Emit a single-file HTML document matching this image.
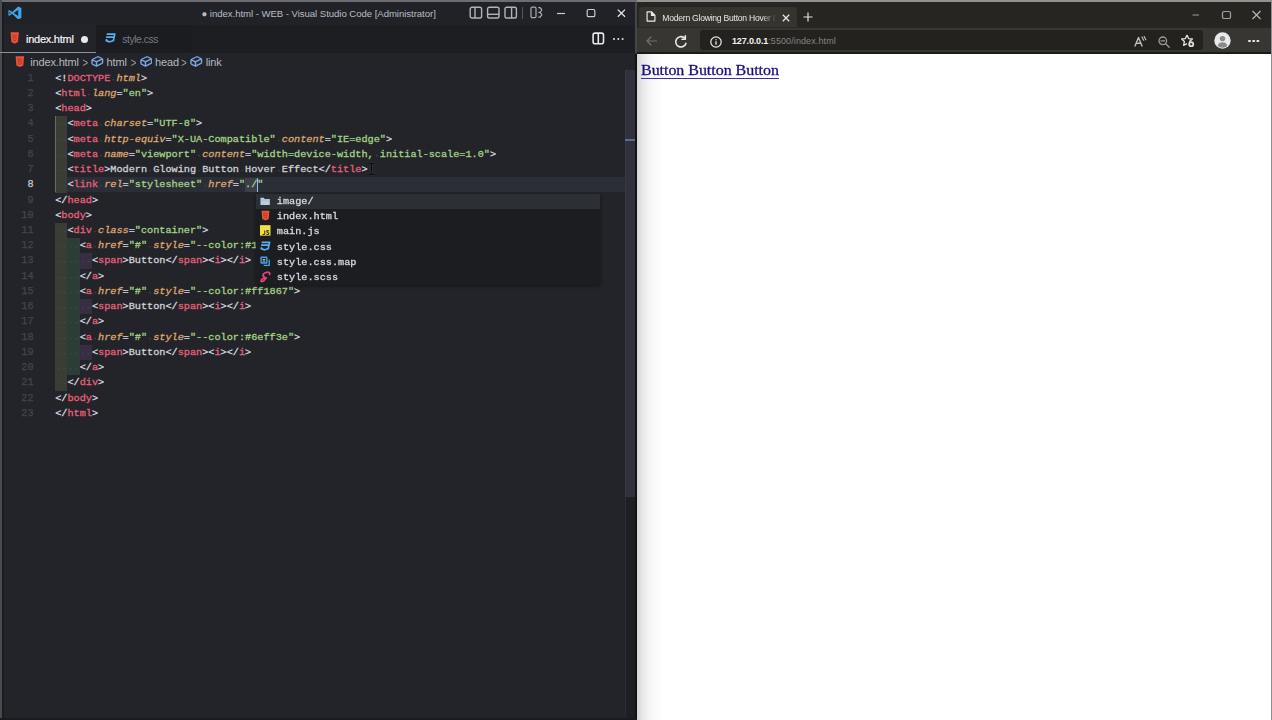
<!DOCTYPE html>
<html lang="en">
<head>
<meta charset="UTF-8">
<title>Modern Glowing Button Hover Effect</title>
<style>
*{box-sizing:border-box;margin:0;padding:0}
html,body{width:1272px;height:720px;overflow:hidden;background:#232429}
body{position:relative;font-family:"Liberation Sans",sans-serif}
.abs{position:absolute}
/* ---------- VS Code ---------- */
#vsc{position:absolute;left:0;top:0;width:637px;height:720px;background:#232429;overflow:hidden}
#vsc .topedge{position:absolute;left:0;top:0;width:637px;height:2px;background:#6c6c72}
#vsc .leftedge{position:absolute;left:0;top:0;width:2px;height:720px;background:#4a4b50}
#vsc .leftedge2{position:absolute;left:2px;top:2px;width:2px;height:718px;background:#1b1c20}
#vsc .rightedge{position:absolute;left:634.800px;top:2px;width:2.200px;height:718px;background:linear-gradient(180deg,#45464c 0,#45464c 51px,#131316 52px,#131316 100%)}
#vsc .tabline{position:absolute;left:0;top:51.500px;width:96px;height:1.400px;background:#8e9097}
#vsc .botedge{position:absolute;left:0;top:718px;width:637px;height:2px;background:#1a1b1f}
#title{position:absolute;left:2px;top:2px;width:635px;height:23px;background:#212227}
#title .txt{position:absolute;left:199.500px;top:0;height:23px;line-height:23px;font-size:9.600px;color:#b9bcc4;white-space:nowrap;letter-spacing:-0.050px}
#tabs{position:absolute;left:2px;top:25px;width:635px;height:28px;background:#1d1e22}
#tab1{position:absolute;left:0;top:0;width:94px;height:28px;background:#232429}
#tab1 .name{position:absolute;left:24px;top:0.800px;line-height:27px;font-size:11px;color:#f2f3f5;letter-spacing:-0.250px;white-space:nowrap;-webkit-text-stroke:0.200px currentColor}
#tab1 .dot{position:absolute;left:78.5px;top:10.5px;width:7px;height:7px;border-radius:50%;background:#e8e9ec}
#tab2{position:absolute;left:94px;top:0;width:95px;height:28px;background:#1b1c20;border-right:1px solid #17181b}
#tab2 .name{position:absolute;left:26.300px;top:0.800px;line-height:27px;font-size:10.400px;color:#767a84;letter-spacing:-0.460px;white-space:nowrap}
#crumbs{position:absolute;left:2px;top:53px;width:624px;height:17px;background:#232429;font-size:11px;color:#b4b8c1;white-space:nowrap;letter-spacing:-0.15px}
#crumbs span{position:absolute;top:0.6px;line-height:17px}
#crumbs .sep{color:#9a9ea8;font-size:9.5px;letter-spacing:0;transform:scaleY(1.25)}
#editor{position:absolute;left:0;top:0;width:637px;height:720px;font-family:"Liberation Mono",monospace;font-size:10.21px}
.ln{-webkit-text-stroke:0.250px currentColor;position:absolute;left:0;width:33.600px;text-align:right;height:15.23px;line-height:15.23px;color:#42444f;font-size:10.21px}
.ln.cur{color:#c5c8d0}
.cl{transform:translateY(0.500px) scaleY(0.920);transform-origin:0 55%;position:absolute;height:15.23px;line-height:15.23px;white-space:pre;color:#c6cad3;-webkit-text-stroke:0.300px currentColor}
.ind{position:absolute;width:12.25px;height:15.3px}
.i1{background:#3a3d33}
.i2{background:#2c3d36}
.i3{background:#382e42}
.p{color:#d9dce3}
.t{color:#e6607a}
.a{color:#dfa66e;font-style:italic}
.s{color:#a3d286}
.x{color:#ced1d9}
.w{position:relative}
.w:before{content:"\00b7";position:absolute;left:0;top:0;color:#474b56;-webkit-text-stroke:0;font-style:normal}
#curline{position:absolute;left:55px;top:177px;width:571px;height:15px;background:#2c2e37}
#caret{position:absolute;left:256.700px;top:177.500px;width:1.500px;height:14.200px;background:#8dbcf3}
#ibeam{position:absolute;left:370.800px;top:162.500px;width:1.400px;height:12.500px;background:#0e0e10;box-shadow:0 0 0 0.400px rgba(200,200,200,.15)}
#ibeam:before,#ibeam:after{content:"";position:absolute;left:-1.600px;width:4.600px;height:1.200px;background:#0e0e10}
#ibeam:before{top:0}
#ibeam:after{bottom:0}
#guide{position:absolute;left:54.700px;top:116px;width:1px;height:76px;background:#686a63}
#sel{position:absolute;left:245.100px;top:177.500px;width:12.200px;height:14.300px;background:#3c3e48}
#scroll{position:absolute;left:625.400px;top:69.700px;width:11.600px;height:650.300px;background:#1e1f24;border-left:1px solid #2b2c31}
#scroll .thumb{position:absolute;left:-1px;top:0;width:11.600px;height:427.800px;background:#31313d;border-left:1.200px solid #393944}
#scroll .mark{position:absolute;left:-1px;top:69.800px;width:10.500px;height:1.500px;background:#5b6a9a}
/* suggest widget */
#sug{position:absolute;left:256px;top:194px;width:343.500px;height:91.200px;background:#1c1d21;font-family:"Liberation Mono",monospace;font-size:10.21px;color:#d6d9e0;box-shadow:0 1px 4px rgba(0,0,0,.45)}
#sug .row{position:absolute;left:0;width:344px;height:15.2px;line-height:15.2px;white-space:pre}
#sug .row.selr{background:#2d2f37}
#sug .row span{transform:scaleY(0.920);transform-origin:0 55%;position:absolute;left:20.800px;top:0;-webkit-text-stroke:0.300px currentColor}
#sug svg{position:absolute}
/* ---------- Browser ---------- */
#edge{position:absolute;left:637px;top:0;width:635px;height:720px;background:#fff;overflow:hidden}
#edge .topedge{position:absolute;left:0;top:0;width:635px;height:2px;background:#919191}
#edge .rightedge{position:absolute;left:633.700px;top:2px;width:2px;height:718px;background:#8f8f8f}
#etabs{position:absolute;left:0;top:2px;width:633.700px;height:26px;background:#262521}
#etab{position:absolute;left:1.500px;top:5.300px;width:158px;height:20.700px;background:#35342f;border-radius:4px 4px 0 0}
#etab .name{position:absolute;left:23.800px;top:0.600px;line-height:21px;font-size:8.600px;color:#e6e6e6;white-space:nowrap;width:113.500px;overflow:hidden;letter-spacing:-0.250px;-webkit-mask-image:linear-gradient(90deg,#000 0,#000 88%,transparent 100%);mask-image:linear-gradient(90deg,#000 0,#000 88%,transparent 100%)}
#etool{position:absolute;left:0;top:27.400px;width:633.700px;height:26.600px;background:#373632;border-bottom:2px solid #1c1b19;box-shadow:inset 0 0.700px 0 #262521}
#url{position:absolute;left:63px;top:2.800px;width:502.500px;height:19.500px;background:#24221e;border-radius:3px}
#url .u{position:absolute;left:32px;top:0.800px;line-height:20px;font-size:9px;color:#8f8f8f;white-space:nowrap;letter-spacing:-0.15px}
#url .u b{color:#f4f4f4;font-weight:bold}
#url .u i{font-style:normal;letter-spacing:0.100px;color:#858585}
#pg{position:absolute;left:0;top:54px;width:633px;height:666px;background:#fff}
#pg .shade{position:absolute;left:0;top:0;width:27px;height:666px;background:linear-gradient(90deg,#d4d4d8 0,#e6e6e8 18%,#f4f4f5 45%,#fcfcfc 75%,#fff 100%)}
#pg .lnk{transform:scaleY(0.900);transform-origin:0 0;position:absolute;left:4px;top:7.200px;font-family:"Liberation Serif",serif;font-size:16px;line-height:19px;color:#170d7c;text-decoration:none;white-space:nowrap;-webkit-text-stroke:0.300px currentColor;letter-spacing:-0.040px}
#pg .ul{position:absolute;left:4px;top:23.600px;width:137.900px;height:1.300px;background:#3a30b0}
</style>
</head>
<body>
<div id="vsc">
  <div id="title">
    <svg class="abs" style="left:5.800px;top:3.500px" width="13.800" height="13.900" viewBox="0 0 100 100" preserveAspectRatio="none"><path d="M74 3 30 44 11 29 3 33v34l8 4 19-15 44 41 23-11V14zM74 28v44L41 50zM11 40l10 10-10 10z" fill="#3fa6ea" fill-rule="evenodd"/></svg>
    
    <svg class="abs" style="left:467px;top:3.500px" width="50" height="14" viewBox="0 0 50 14" fill="none" stroke="#b0b3ba" stroke-width="1.400">
      <rect x="1.200" y="1.200" width="11.400" height="10.800" rx="1.800"/><path d="M6 1.200v10.800"/>
      <rect x="18.600" y="1.200" width="11.400" height="10.800" rx="1.800"/><path d="M18.600 8.300h11.400"/>
      <rect x="36" y="1.200" width="11.400" height="10.800" rx="1.800"/><path d="M42.600 1.200v10.800"/>
    </svg>
    <div class="abs" style="left:519.700px;top:4.500px;width:1.700px;height:12.500px;background:#53555c"></div>
    <svg class="abs" style="left:527.500px;top:4px" width="13" height="13" viewBox="0 0 13 13" fill="none" stroke="#a9acb4" stroke-width="1.200">
      <rect x="1" y="1.200" width="5" height="10.400" rx="1.200"/><path d="M8.300 1.600h1.700l2 2.400M8.300 11.200h1.700l2-2.400M8.300 6.400h1.800l1.900-2.400M10.100 6.400l1.900 2.400"/>
    </svg>
    <svg class="abs" style="left:553px;top:5px" width="74" height="12" viewBox="0 0 74 12" fill="none" stroke="#c9ccd3" stroke-width="1.200">
      <path d="M2 6.500h8"/>
      <rect x="32.200" y="2.500" width="7.600" height="7.200" rx="1.300"/>
      <path d="M62.800 2.600l7.200 7.200M70 2.600l-7.200 7.200" stroke="#e4e6ea" stroke-width="1.300"/>
    </svg>
    <div class="txt">&#9679; index.html - WEB - Visual Studio Code [Administrator]</div>
  </div>
  <div id="tabs">
    <div id="tab1"><svg class="abs" style="left:8px;top:7.300px" width="9.400" height="12" preserveAspectRatio="none" viewBox="0 0 32 36"><path d="M2 1h28l-2.6 29L16 35 4.6 30z" fill="#e5533a"/><path d="M24 8H8l.8 10h10.4l-.5 5-2.7.9-2.7-.9-.2-2.4H9.9l.5 5.2 5.6 1.9 5.6-1.9 1-11.400H12.500l-.3-2.900h11.500z" fill="#c7391f"/></svg><div class="name">index.html</div><div class="dot"></div></div>
    
    <svg class="abs" style="left:590px;top:6.500px" width="13" height="13" viewBox="0 0 13 13" fill="none" stroke="#e6e7ea" stroke-width="1.600"><rect x="1.100" y="1.100" width="10.400" height="10.600" rx="2"/><path d="M6.300 1v10.800"/></svg>
    <div class="abs" style="left:611px;top:12.500px;width:2.200px;height:2.200px;border-radius:50%;background:#e3e4e8;box-shadow:4.300px 0 0 #e3e4e8,8.600px 0 0 #e3e4e8"></div>
    <div id="tab2"><svg class="abs" style="left:9.300px;top:8px" width="11" height="10.600" viewBox="1.500 2.500 21 20"><path d="m5 3-.650 3.340h13.590L17.500 8.500H3.920l-.660 3.330h13.590l-.760 3.810-5.480 1.810-4.750-1.810.330-1.640H2.850l-.790 4 7.850 3 9.050-3 1.200-6.030.240-1.210L21.940 3z" fill="#56aef3"/></svg><div class="name">style.css</div></div>
  </div>
  <div id="crumbs">
    <svg class="abs" style="left:12.800px;top:2.800px" width="9.700" height="11.400" preserveAspectRatio="none" viewBox="0 0 32 36"><path d="M2 1h28l-2.6 29L16 35 4.6 30z" fill="#e5533a"/><path d="M24 8H8l.8 10h10.4l-.5 5-2.7.9-2.7-.9-.2-2.4H9.9l.5 5.2 5.6 1.9 5.6-1.9 1-11.400H12.500l-.3-2.900h11.500z" fill="#c7391f"/></svg><svg class="abs" style="left:89.1px;top:3.400px" width="12.600" height="10.600" viewBox="0.500 1.500 15 13"><path d="M14.450 4.500l-5-2.500h-.9l-7 3.500-.55.890v4.500l.55.900 5 2.500h.9l7-3.500.55-.900v-4.500l-.55-.890zm-8 8.640l-4.500-2.250v-4l4.500 2v4.250zm.5-5.110L2.290 5.970l6.600-3.300L13.440 4.900 6.950 8.030zM14 9.890l-6.500 3.250V8.900L14 5.890v4z" fill="#86b3ee" stroke="#86b3ee" stroke-width=".600"/></svg><svg class="abs" style="left:137.6px;top:3.400px" width="12.600" height="10.600" viewBox="0.500 1.500 15 13"><path d="M14.450 4.500l-5-2.500h-.9l-7 3.500-.55.890v4.500l.55.900 5 2.500h.9l7-3.500.55-.900v-4.500l-.55-.890zm-8 8.640l-4.500-2.250v-4l4.500 2v4.250zm.5-5.110L2.290 5.970l6.600-3.300L13.440 4.900 6.950 8.030zM14 9.890l-6.500 3.250V8.900L14 5.890v4z" fill="#86b3ee" stroke="#86b3ee" stroke-width=".600"/></svg><svg class="abs" style="left:188.2px;top:3.400px" width="12.600" height="10.600" viewBox="0.500 1.500 15 13"><path d="M14.450 4.500l-5-2.500h-.9l-7 3.500-.55.890v4.500l.55.900 5 2.500h.9l7-3.500.55-.900v-4.500l-.55-.890zm-8 8.640l-4.500-2.250v-4l4.500 2v4.250zm.5-5.110L2.290 5.970l6.600-3.300L13.440 4.900 6.950 8.030zM14 9.890l-6.500 3.250V8.900L14 5.890v4z" fill="#86b3ee" stroke="#86b3ee" stroke-width=".600"/></svg>
    <span style="left:28.200px">index.html</span><span class="sep" style="left:80.500px">&gt;</span>
    <span style="left:104.600px">html</span><span class="sep" style="left:128.800px">&gt;</span>
    <span style="left:153px">head</span><span class="sep" style="left:179.300px">&gt;</span>
    <span style="left:203.700px">link</span>
  </div>
  <div id="editor">
    <div id="curline"></div>
    <div id="sel"></div>
<div class="ln" style="top:70.70px">1</div>
<div class="cl" style="top:70.70px;left:55.20px"><span class="p">&lt;!</span><span class="t">DOCTYPE</span><span class="w"> </span><span class="a">html</span><span class="p">&gt;</span></div>
<div class="ln" style="top:85.93px">2</div>
<div class="cl" style="top:85.93px;left:55.20px"><span class="p">&lt;</span><span class="t">html</span><span class="w"> </span><span class="a">lang</span><span class="p">=</span><span class="s">"en"</span><span class="p">&gt;</span></div>
<div class="ln" style="top:101.16px">3</div>
<div class="cl" style="top:101.16px;left:55.20px"><span class="p">&lt;</span><span class="t">head</span><span class="p">&gt;</span></div>
<div class="ind i1" style="left:55.20px;top:116.39px"></div>
<div class="ln" style="top:116.39px">4</div>
<div class="cl" style="top:116.39px;left:55.20px"><span class="w"> </span><span class="w"> </span><span class="p">&lt;</span><span class="t">meta</span><span class="w"> </span><span class="a">charset</span><span class="p">=</span><span class="s">"UTF-8"</span><span class="p">&gt;</span></div>
<div class="ind i1" style="left:55.20px;top:131.62px"></div>
<div class="ln" style="top:131.62px">5</div>
<div class="cl" style="top:131.62px;left:55.20px"><span class="w"> </span><span class="w"> </span><span class="p">&lt;</span><span class="t">meta</span><span class="w"> </span><span class="a">http-equiv</span><span class="p">=</span><span class="s">"X-UA-Compatible"</span><span class="w"> </span><span class="a">content</span><span class="p">=</span><span class="s">"IE=edge"</span><span class="p">&gt;</span></div>
<div class="ind i1" style="left:55.20px;top:146.85px"></div>
<div class="ln" style="top:146.85px">6</div>
<div class="cl" style="top:146.85px;left:55.20px"><span class="w"> </span><span class="w"> </span><span class="p">&lt;</span><span class="t">meta</span><span class="w"> </span><span class="a">name</span><span class="p">=</span><span class="s">"viewport"</span><span class="w"> </span><span class="a">content</span><span class="p">=</span><span class="s">"width=device-width,</span><span class="w"> </span><span class="s">initial-scale=1.0"</span><span class="p">&gt;</span></div>
<div class="ind i1" style="left:55.20px;top:162.08px"></div>
<div class="ln" style="top:162.08px">7</div>
<div class="cl" style="top:162.08px;left:55.20px"><span class="w"> </span><span class="w"> </span><span class="p">&lt;</span><span class="t">title</span><span class="p">&gt;</span><span class="x">Modern</span><span class="w"> </span><span class="x">Glowing</span><span class="w"> </span><span class="x">Button</span><span class="w"> </span><span class="x">Hover</span><span class="w"> </span><span class="x">Effect</span><span class="p">&lt;/</span><span class="t">title</span><span class="p">&gt;</span></div>
<div class="ind i1" style="left:55.20px;top:177.31px"></div>
<div class="ln cur" style="top:177.31px">8</div>
<div class="cl" style="top:177.31px;left:55.20px"><span class="w"> </span><span class="w"> </span><span class="p">&lt;</span><span class="t">link</span><span class="w"> </span><span class="a">rel</span><span class="p">=</span><span class="s">"stylesheet"</span><span class="w"> </span><span class="a">href</span><span class="p">=</span><span class="s">"./"</span></div>
<div class="ln" style="top:192.54px">9</div>
<div class="cl" style="top:192.54px;left:55.20px"><span class="p">&lt;/</span><span class="t">head</span><span class="p">&gt;</span></div>
<div class="ln" style="top:207.77px">10</div>
<div class="cl" style="top:207.77px;left:55.20px"><span class="p">&lt;</span><span class="t">body</span><span class="p">&gt;</span></div>
<div class="ind i1" style="left:55.20px;top:223.00px"></div>
<div class="ln" style="top:223.00px">11</div>
<div class="cl" style="top:223.00px;left:55.20px"><span class="w"> </span><span class="w"> </span><span class="p">&lt;</span><span class="t">div</span><span class="w"> </span><span class="a">class</span><span class="p">=</span><span class="s">"container"</span><span class="p">&gt;</span></div>
<div class="ind i1" style="left:55.20px;top:238.23px"></div>
<div class="ind i2" style="left:67.45px;top:238.23px"></div>
<div class="ln" style="top:238.23px">12</div>
<div class="cl" style="top:238.23px;left:55.20px"><span class="w"> </span><span class="w"> </span><span class="w"> </span><span class="w"> </span><span class="p">&lt;</span><span class="t">a</span><span class="w"> </span><span class="a">href</span><span class="p">=</span><span class="s">"#"</span><span class="w"> </span><span class="a">style</span><span class="p">=</span><span class="s">"--color:#1867ff"</span><span class="p">&gt;</span></div>
<div class="ind i1" style="left:55.20px;top:253.46px"></div>
<div class="ind i2" style="left:67.45px;top:253.46px"></div>
<div class="ind i3" style="left:79.71px;top:253.46px"></div>
<div class="ln" style="top:253.46px">13</div>
<div class="cl" style="top:253.46px;left:55.20px"><span class="w"> </span><span class="w"> </span><span class="w"> </span><span class="w"> </span><span class="w"> </span><span class="w"> </span><span class="p">&lt;</span><span class="t">span</span><span class="p">&gt;</span><span class="x">Button</span><span class="p">&lt;/</span><span class="t">span</span><span class="p">&gt;&lt;</span><span class="t">i</span><span class="p">&gt;&lt;/</span><span class="t">i</span><span class="p">&gt;</span></div>
<div class="ind i1" style="left:55.20px;top:268.69px"></div>
<div class="ind i2" style="left:67.45px;top:268.69px"></div>
<div class="ln" style="top:268.69px">14</div>
<div class="cl" style="top:268.69px;left:55.20px"><span class="w"> </span><span class="w"> </span><span class="w"> </span><span class="w"> </span><span class="p">&lt;/</span><span class="t">a</span><span class="p">&gt;</span></div>
<div class="ind i1" style="left:55.20px;top:283.92px"></div>
<div class="ind i2" style="left:67.45px;top:283.92px"></div>
<div class="ln" style="top:283.92px">15</div>
<div class="cl" style="top:283.92px;left:55.20px"><span class="w"> </span><span class="w"> </span><span class="w"> </span><span class="w"> </span><span class="p">&lt;</span><span class="t">a</span><span class="w"> </span><span class="a">href</span><span class="p">=</span><span class="s">"#"</span><span class="w"> </span><span class="a">style</span><span class="p">=</span><span class="s">"--color:#ff1867"</span><span class="p">&gt;</span></div>
<div class="ind i1" style="left:55.20px;top:299.15px"></div>
<div class="ind i2" style="left:67.45px;top:299.15px"></div>
<div class="ind i3" style="left:79.71px;top:299.15px"></div>
<div class="ln" style="top:299.15px">16</div>
<div class="cl" style="top:299.15px;left:55.20px"><span class="w"> </span><span class="w"> </span><span class="w"> </span><span class="w"> </span><span class="w"> </span><span class="w"> </span><span class="p">&lt;</span><span class="t">span</span><span class="p">&gt;</span><span class="x">Button</span><span class="p">&lt;/</span><span class="t">span</span><span class="p">&gt;&lt;</span><span class="t">i</span><span class="p">&gt;&lt;/</span><span class="t">i</span><span class="p">&gt;</span></div>
<div class="ind i1" style="left:55.20px;top:314.38px"></div>
<div class="ind i2" style="left:67.45px;top:314.38px"></div>
<div class="ln" style="top:314.38px">17</div>
<div class="cl" style="top:314.38px;left:55.20px"><span class="w"> </span><span class="w"> </span><span class="w"> </span><span class="w"> </span><span class="p">&lt;/</span><span class="t">a</span><span class="p">&gt;</span></div>
<div class="ind i1" style="left:55.20px;top:329.61px"></div>
<div class="ind i2" style="left:67.45px;top:329.61px"></div>
<div class="ln" style="top:329.61px">18</div>
<div class="cl" style="top:329.61px;left:55.20px"><span class="w"> </span><span class="w"> </span><span class="w"> </span><span class="w"> </span><span class="p">&lt;</span><span class="t">a</span><span class="w"> </span><span class="a">href</span><span class="p">=</span><span class="s">"#"</span><span class="w"> </span><span class="a">style</span><span class="p">=</span><span class="s">"--color:#6eff3e"</span><span class="p">&gt;</span></div>
<div class="ind i1" style="left:55.20px;top:344.84px"></div>
<div class="ind i2" style="left:67.45px;top:344.84px"></div>
<div class="ind i3" style="left:79.71px;top:344.84px"></div>
<div class="ln" style="top:344.84px">19</div>
<div class="cl" style="top:344.84px;left:55.20px"><span class="w"> </span><span class="w"> </span><span class="w"> </span><span class="w"> </span><span class="w"> </span><span class="w"> </span><span class="p">&lt;</span><span class="t">span</span><span class="p">&gt;</span><span class="x">Button</span><span class="p">&lt;/</span><span class="t">span</span><span class="p">&gt;&lt;</span><span class="t">i</span><span class="p">&gt;&lt;/</span><span class="t">i</span><span class="p">&gt;</span></div>
<div class="ind i1" style="left:55.20px;top:360.07px"></div>
<div class="ind i2" style="left:67.45px;top:360.07px"></div>
<div class="ln" style="top:360.07px">20</div>
<div class="cl" style="top:360.07px;left:55.20px"><span class="w"> </span><span class="w"> </span><span class="w"> </span><span class="w"> </span><span class="p">&lt;/</span><span class="t">a</span><span class="p">&gt;</span></div>
<div class="ind i1" style="left:55.20px;top:375.30px"></div>
<div class="ln" style="top:375.30px">21</div>
<div class="cl" style="top:375.30px;left:55.20px"><span class="w"> </span><span class="w"> </span><span class="p">&lt;/</span><span class="t">div</span><span class="p">&gt;</span></div>
<div class="ln" style="top:390.53px">22</div>
<div class="cl" style="top:390.53px;left:55.20px"><span class="p">&lt;/</span><span class="t">body</span><span class="p">&gt;</span></div>
<div class="ln" style="top:405.76px">23</div>
<div class="cl" style="top:405.76px;left:55.20px"><span class="p">&lt;/</span><span class="t">html</span><span class="p">&gt;</span></div>
    <div id="guide"></div>
    <div id="caret"></div>
    <div id="ibeam"></div>
  </div>
  <div id="scroll"><div class="thumb"></div><div class="mark"></div></div>
  <div id="sug">
    <div class="row selr" style="top:0.0px"><svg style="left:4.400px;top:2.500px" viewBox="0 0 22 16" width="10.300" height="8.300" preserveAspectRatio="none"><path d="M1 1.500h7l2 2.500h11v11.500H1z" fill="#b7cfd9"/><path d="M1 6h20" stroke="#8fb0be" stroke-width="1"/></svg><span>image/</span></div>
    <div class="row" style="top:15.2px"><svg style="left:5.200px;top:1.300px" viewBox="0 0 32 36" width="9" height="11.300"><path d="M2 1h28l-2.600 29L16 35 4.600 30z" fill="#e5533a"/><path d="M24 8H8l.800 10h10.400l-.500 5-2.700.900-2.700-.900-.200-2.400H9.900l.500 5.200 5.600 1.900 5.600-1.900 1-11.400H12.500l-.300-2.900h11.500z" fill="#c7391f"/></svg><span>index.html</span></div>
    <div class="row" style="top:30.4px"><svg style="left:4.400px;top:1px" viewBox="0 0 20 20" width="10.500" height="10.800"><rect width="20" height="20" fill="#f2de45"/><path d="M9 10v6.200c0 1.200-.7 1.800-1.800 1.800-.9 0-1.500-.5-1.900-1.200M12 16.400c.5.900 1.300 1.600 2.700 1.600 1.300 0 2.300-.7 2.300-1.900 0-2.500-4.300-1.700-4.300-4 0-1 .8-1.700 2-1.700 1 0 1.700.4 2.200 1.300" fill="none" stroke="#3a3520" stroke-width="2"/></svg><span>main.js</span></div>
    <div class="row" style="top:45.6px"><svg style="left:4.300px;top:1.500px" viewBox="1.500 2.500 21 20" width="10.800" height="10.800"><path d="m5 3-.650 3.340h13.590L17.500 8.500H3.920l-.660 3.330h13.590l-.760 3.810-5.480 1.810-4.750-1.810.330-1.640H2.850l-.790 4 7.850 3 9.050-3 1.200-6.030.240-1.210L21.940 3z" fill="#56aef3"/></svg><span>style.css</span></div>
    <div class="row" style="top:60.8px"><svg style="left:4.400px;top:1px" viewBox="0 0 20 20" width="10.500" height="10.800" fill="none" stroke="#4aa3ef" stroke-width="2.600"><rect x="2" y="2" width="11" height="11" rx="1"/><path d="M17.500 7v10.500H7"/><path d="M5 6.500h5M5 9.500h5" stroke="#d9ecfc" stroke-width="1.600"/></svg><span>style.css.map</span></div>
    <div class="row" style="top:76.0px"><svg style="left:4px;top:0.800px" viewBox="2.500 1.500 16 17.500" width="11" height="12" fill="none" stroke="#e5457c" stroke-width="2.400" stroke-linecap="round"><path d="M16.500 6.500c.8-2.300-1.800-4-5.200-2.900C8 4.700 5.800 7.200 7.300 9c1.200 1.400 3.300 1.500 2.900 3.600-.4 2.100-3.100 4.600-5.100 4.300-1.600-.3-1.300-2.200.6-3.600 1.900-1.400 4.500-1.900 6.100-1.500"/></svg><span>style.scss</span></div>
  </div>
  <div class="rightedge"></div><div class="topedge"></div><div class="leftedge"></div><div class="leftedge2"></div><div class="botedge"></div><div class="tabline"></div>
</div>
<div id="edge">
  <div id="etabs">
    <div id="etab"><div class="name">Modern Glowing Button Hover Effect</div></div>
    
    <svg class="abs" style="left:8.500px;top:9px" width="10" height="11" viewBox="0 0 11 12" fill="none" stroke="#eaeaea" stroke-width="1.300" stroke-linejoin="round"><path d="M1.200 1h5l3.600 3.600v6.400H1.200z"/><path d="M6 1v3.800h3.800" fill="#eaeaea"/></svg>
    <svg class="abs" style="left:144.500px;top:12px" width="8" height="8" viewBox="0 0 8 8" stroke="#e6e6e6" stroke-width="1.300"><path d="M.8.800l6.400 6.400M7.200.800L.8 7.200"/></svg>
    <svg class="abs" style="left:166.200px;top:10px" width="10" height="10" viewBox="0 0 11 11" stroke="#e0e0e0" stroke-width="1.300"><path d="M5.500.5v10M.5 5.500h10"/></svg>
    <svg class="abs" style="left:554px;top:8px" width="72" height="10" viewBox="0 0 72 10" fill="none" stroke="#8d8d8d" stroke-width="1.200">
      <path d="M1.500 5h6.500"/>
      <rect x="31.500" y="1.500" width="8" height="7" rx="1.600" stroke="#a2a2a2"/>
      <path d="M61.500 1l8 8M69.500 1l-8 8" stroke="#b5b5b5"/>
    </svg>
  </div>
  <div id="etool">
    
    <svg class="abs" style="left:8.500px;top:8.300px" width="11.500" height="10" viewBox="0 0 12 10" fill="none" stroke="#6f6f6f" stroke-width="1.300" stroke-linecap="round" stroke-linejoin="round"><path d="M5.200.800L1 5l4.200 4.200M1 5h10"/></svg>
    <svg class="abs" style="left:37px;top:7.500px" width="14" height="14" viewBox="0 0 14 14" fill="none" stroke="#ececec" stroke-width="1.600" stroke-linecap="round"><path d="M11.900 8.400A5.200 5.200 0 1 1 10.200 2.800"/><path d="M11.300.900v3.300H8" stroke-linejoin="round"/></svg>
    <div id="url">
      <svg class="abs" style="left:10.300px;top:5.500px" width="12" height="12" viewBox="0 0 12 12" fill="none" stroke="#ececec" stroke-width="1.200"><circle cx="6" cy="6" r="5.200"/><path d="M6 5.300v3.400M6 3.200v1.100" stroke-width="1.300"/></svg>
      <svg class="abs" style="left:434px;top:5.500px" width="13" height="11" viewBox="0 0 13 11" fill="none" stroke="#bdbdbd" stroke-width="1.400" stroke-linecap="round" stroke-linejoin="round"><path d="M1 10L4.500 1.500 8 10M2.200 7.200h4.600"/><path d="M8 1l1.600 3.200M10.200.600l1.600 3.200" stroke-width="1.200"/></svg>
      <svg class="abs" style="left:458px;top:5.500px" width="12" height="12" viewBox="0 0 12 12" fill="none" stroke="#9a9a9a" stroke-width="1.300" stroke-linecap="round"><circle cx="4.800" cy="4.800" r="3.800"/><path d="M7.700 7.700l3.500 3.500M3 4.800h3.600"/></svg>
      <svg class="abs" style="left:481px;top:4px" width="14" height="14" viewBox="0 0 14 14" fill="none" stroke="#e2e2e2" stroke-width="1.300" stroke-linejoin="round"><path d="M6 1l1.600 3.600 3.800.400-2.800 2.600.300 1.200M6 1L4.400 4.600.600 5l2.800 2.600-.800 3.800L6 9.600"/><circle cx="10.200" cy="10.200" r="2.900" fill="#e2e2e2" stroke="none"/><path d="M10.200 8.900v2.600M8.900 10.200h2.600" stroke="#242322" stroke-width="1"/></svg>
      <div class="u"><b>127.0.0.1</b><i>:5500/index.html</i></div></div>
    <svg class="abs" style="left:577.300px;top:4.800px" width="17" height="17" viewBox="0 0 17 17"><circle cx="8.500" cy="8.500" r="8.200" fill="#e9e9e9"/><circle cx="8.500" cy="6.600" r="2.700" fill="#8a8a8a"/><path d="M3.600 13.800c.700-2.600 2.600-3.600 4.900-3.600s4.200 1 4.900 3.600c-1.300 1.300-3 2-4.900 2s-3.600-.700-4.900-2z" fill="#8a8a8a"/></svg>
    <div class="abs" style="left:611px;top:12.200px;width:2.800px;height:2.800px;border-radius:50%;background:#e8e8e8;box-shadow:4.200px 0 0 #e8e8e8,8.400px 0 0 #e8e8e8"></div>
  </div>
  <div id="pg"><div class="shade"></div><div class="lnk">Button Button Button</div><div class="ul"></div></div>
  <div class="topedge"></div><div class="rightedge"></div>
</div>
</body>
</html>
